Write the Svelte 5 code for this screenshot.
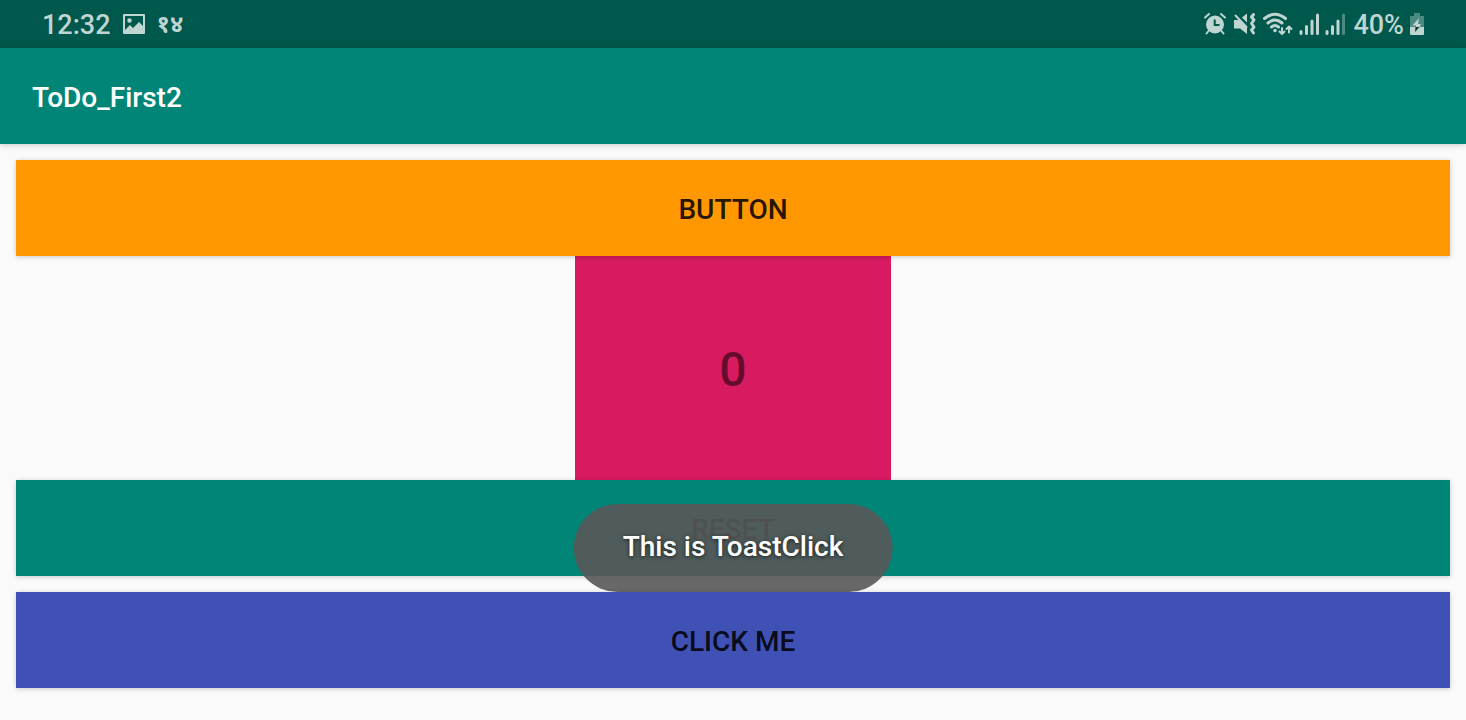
<script>
  let count = $state(0);
  let toast = $state('This is ToastClick');

  function increment() {
    count += 1;
  }

  function reset() {
    count = 0;
  }

  function showToast() {
    toast = 'This is ToastClick';
  }
</script>

<div class="screen">
  <div class="status">
    <div class="group left">
      <time>12:32</time>
      <svg width="22" height="20" viewBox="0 0 22 20" aria-hidden="true">
        <path fill-rule="evenodd" d="M1 0H21Q22 0 22 1V19Q22 20 21 20H1Q0 20 0 19V1Q0 0 1 0ZM2 2V16L7 11L10 14L16 8L20 12V2Z" />
        <circle cx="6.5" cy="6.5" r="2.2" />
      </svg>
      <span class="date">१४</span>
    </div>
    <div class="group right">
      <svg width="24" height="24" viewBox="0 0 24 24" aria-hidden="true">
        <path fill-rule="evenodd" d="M12 3.5A9 9 0 1 1 12 21.5A9 9 0 1 1 12 3.5ZM10.7 7.5V14H16.5V12H12.7V7.5Z" />
        <path class="line" d="M2 5.5L6 2M22 5.5L18 2M5.5 19L3.5 21.5M18.5 19L20.5 21.5" />
      </svg>
      <svg width="24" height="24" viewBox="0 0 24 24" aria-hidden="true">
        <path d="M1 8H6L14 15V22L7 16.500H1ZM9 5.500L14 1.500V10.500Z" />
        <path class="line" d="M2.500 3.500L13.500 15" />
        <path class="line wave" d="M20.500 2.500L18.500 5L21 8L18.500 11.500L21 15L18.500 18L20.500 21" />
      </svg>
      <svg width="30" height="24" viewBox="0 0 30 24" aria-hidden="true">
        <path class="line wave" d="M1.500 6.500Q12 -2 22.500 6.500M5 11Q12 5 19 11M8.500 15Q12 12 15.500 15" />
        <circle cx="12" cy="18.500" r="1.800" />
        <path class="line" d="M19 16V22M16.500 19.500L19 22L21.500 19.500M26 20.500V14.500M23.500 17L26 14.500L28.500 17" />
      </svg>
      <svg class="first-sim" width="20" height="22" viewBox="0 0 20 22" aria-hidden="true">
        <path class="line wave" d="M2 18.500V20.500M7.500 13.500V20.500M13 8V20.500M18.500 2V20.500" />
      </svg>
      <svg width="20" height="22" viewBox="0 0 20 22" aria-hidden="true">
        <path class="line wave" d="M2 18.500V20.500M7.500 13.500V20.500M13 8V20.500" />
        <path class="line wave faint" d="M18.500 2V20.500" />
      </svg>
      <span class="percent">40%</span>
      <svg width="14" height="22" viewBox="0 0 14 22" aria-hidden="true">
        <path class="faint" d="M4 0H10V3H14V14H0V3H4Z" />
        <path d="M0 14H14V21Q14 22 13 22H1Q0 22 0 21Z" />
        <path d="M9 5L2.500 12.500H6V14H9.500L11 11H8Z" />
        <path class="bolt" d="M5.500 14H9.500L5 19Z" />
      </svg>
    </div>
  </div>

  <header><h1>ToDo_First2</h1></header>

  <main>
    <button class="action orange" onclick={increment}>BUTTON</button>
    <output class="counter">{count}</output>
    <div class="reset">
      <button class="action teal" onclick={reset}>RESET</button>
      {#if toast}
        <div class="toast" role="status">{toast}</div>
      {/if}
    </div>
    <button class="action blue" onclick={showToast}>CLICK ME</button>
  </main>
</div>

<style>
  :global(body) {
    margin: 0;
    background: #fafafa;
  }

  .screen {
    display: flex;
    flex-direction: column;
    min-height: 100vh;
    font-family: Roboto, "Noto Sans", sans-serif;
    font-size: 28px;
    font-weight: 500;
  }

  .status {
    display: flex;
    justify-content: space-between;
    align-items: center;
    height: 48px;
    padding: 0 42px;
    background: #00574b;
    color: #bfd5d2;
    font-size: 27px;
    line-height: 32px;
  }

  .group {
    display: flex;
    align-items: center;
  }

  .left {
    gap: 12px;
  }

  .right {
    gap: 6px;
  }

  time,
  .percent {
    padding-top: 2px;
  }

  .percent {
    padding-left: 2px;
  }

  .date {
    font-size: 24px;
    font-weight: 700;
  }

  svg {
    display: block;
    fill: currentColor;
  }

  .line {
    fill: none;
    stroke: currentColor;
    stroke-width: 2;
    stroke-linecap: round;
    stroke-linejoin: round;
  }

  .wave {
    stroke-width: 3;
  }

  .faint {
    opacity: 0.4;
  }

  .bolt {
    fill: #00382f;
  }

  header {
    display: flex;
    align-items: center;
    box-sizing: border-box;
    height: 96px;
    padding: 4px 32px 0;
    background: #008577;
    color: #fff;
    box-shadow: 0 1px 6px rgb(0 0 0 / 0.2);
  }

  h1 {
    margin: 0;
    font-size: 28px;
    font-weight: 500;
    line-height: 32px;
  }

  main {
    display: flex;
    flex: 1;
    flex-direction: column;
    align-items: center;
    padding: 16px 16px 32px;
  }

  .action {
    position: relative;
    display: block;
    width: 100%;
    height: 96px;
    padding: 4px 0 0;
    border: 0;
    color: rgb(0 0 0 / 0.87);
    font: inherit;
    line-height: 32px;
    box-shadow: 0 1px 5px rgb(0 0 0 / 0.2);
    cursor: pointer;
  }

  .orange {
    background: #ff9800;
  }

  .teal {
    background: #008577;
  }

  .blue {
    background: #3f51b5;
  }

  .counter {
    display: flex;
    flex: 1;
    align-items: center;
    justify-content: center;
    box-sizing: border-box;
    width: 316px;
    padding-top: 4px;
    background: #d81b60;
    color: rgb(0 0 0 / 0.54);
    font-size: 48px;
    line-height: 56px;
  }

  .reset {
    position: relative;
    width: 100%;
    margin-bottom: 16px;
  }

  .toast {
    position: absolute;
    top: 24px;
    left: 50%;
    padding: 27px 49px 29px;
    border-radius: 44px;
    background: rgb(88 88 88 / 0.9);
    color: #fff;
    line-height: 32px;
    text-shadow: 0 1px 4px rgb(0 0 0 / 0.7);
    white-space: nowrap;
    transform: translateX(-50%);
  }
</style>
